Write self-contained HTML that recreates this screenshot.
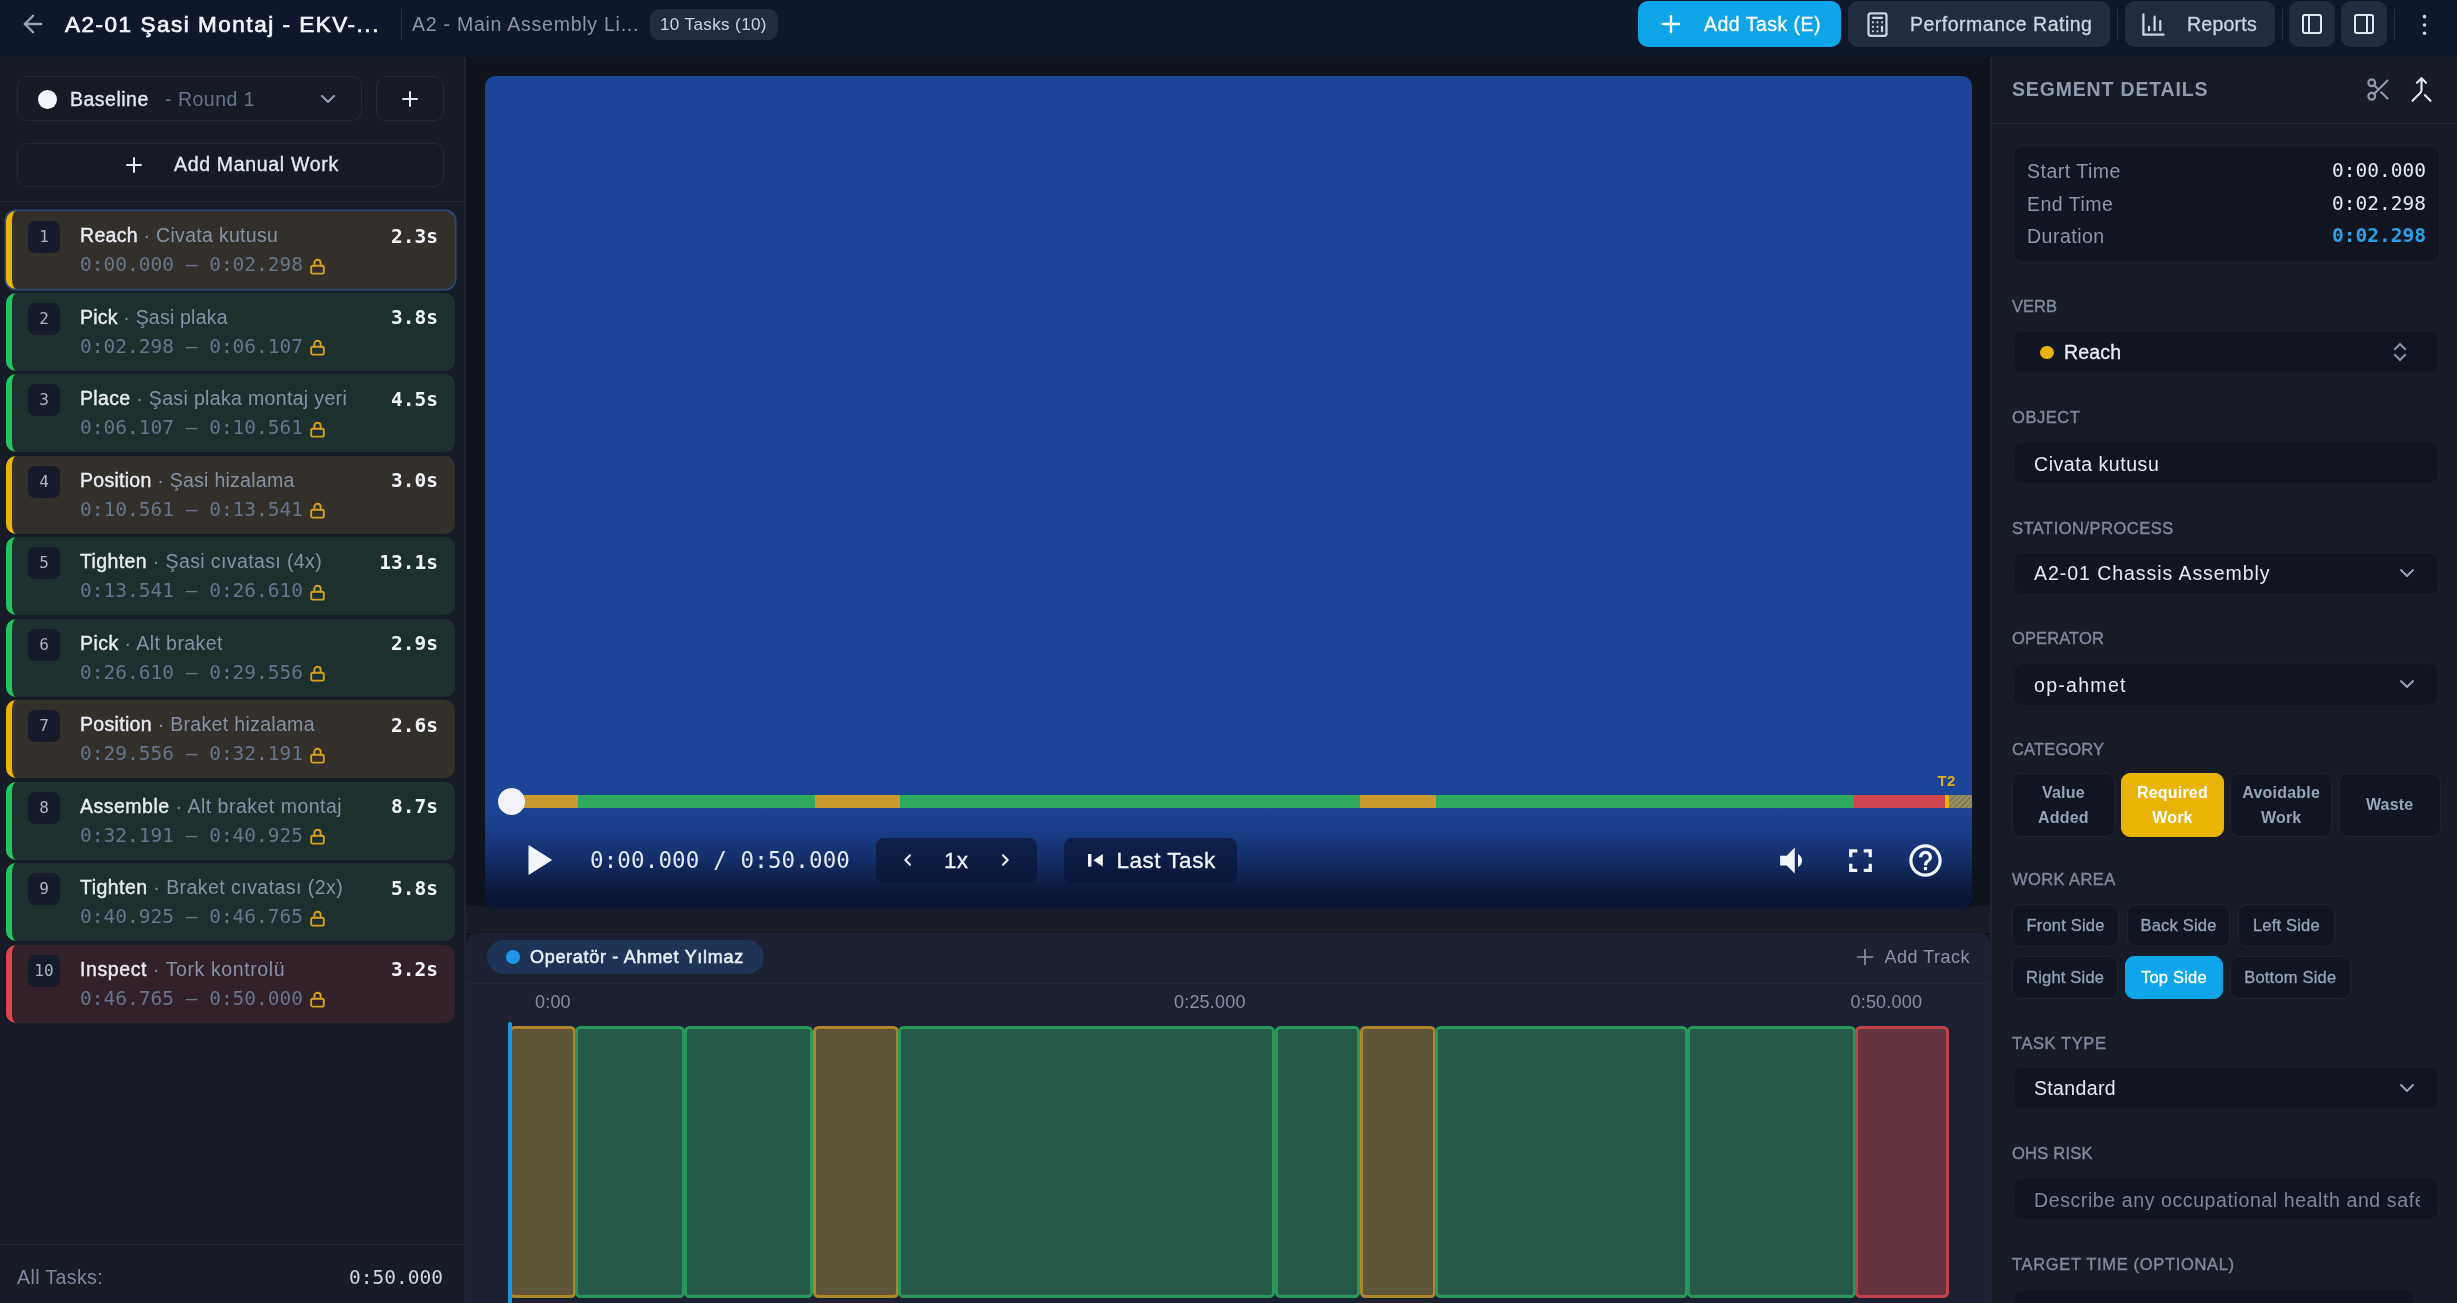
<!DOCTYPE html>
<html lang="en">
<head>
<meta charset="utf-8">
<title>A2-01 Şasi Montaj</title>
<style>
*{box-sizing:border-box;margin:0;padding:0}
html,body{width:2457px;height:1303px;overflow:hidden}
body{background:#0f131d;color:#e2e8f0;font-family:"Liberation Sans",sans-serif;font-size:19.5px;position:relative;-webkit-font-smoothing:antialiased}
.mono{font-family:"DejaVu Sans Mono","Liberation Mono",monospace}
.abs{position:absolute}
svg{display:block;position:absolute;overflow:visible}
.t{position:absolute;white-space:nowrap;line-height:1}
/* header */
#hdr{position:absolute;left:0;top:0;width:2457px;height:57px;background:#0f172a}
.hbtn{position:absolute;top:1px;height:46px;border-radius:10px;background:#222c3e}
.hdiv{position:absolute;top:9px;width:1px;height:31px;background:#263043}
/* sidebar */
#side{position:absolute;left:0;top:57px;width:466px;height:1246px;background:#171b26;border-right:2px solid #1e2331}
.obox{position:absolute;border:1px solid #232938;border-radius:10px;background:#161a25}
.task{position:absolute;left:6px;width:449px;height:78px;border-radius:10px;border-left:6px solid;overflow:hidden}
.task.y{background:#332f2a;border-color:#eab308}
.task.g{background:#1d302d;border-color:#22c55e}
.task.r{background:#322129;border-color:#de444a}
.task .n{position:absolute;left:16px;top:10px;width:32px;height:32px;border-radius:7px;background:#161b2b;color:#aab4c4;font-size:16px;text-align:center;line-height:32.5px}
.task .v{position:absolute;left:68px;top:15.4px;font-size:19.5px;line-height:1;color:#e8ecf2;white-space:nowrap;letter-spacing:.3px}
.task .v b{font-weight:normal;-webkit-text-stroke:.4px #e8ecf2}
.task .v i{font-style:normal;color:#8592a6}
.task .tm{position:absolute;left:68px;top:44.4px;font-size:19.5px;line-height:1;color:#64748b;white-space:nowrap}
.task .d{position:absolute;right:17px;top:15.5px;font-size:19.5px;line-height:1;font-weight:bold;color:#f1f5f9}
.task svg{left:296px;top:45.5px}
/* video */
#vid{position:absolute;left:485px;top:76px;width:1487px;height:830px;border-radius:10px;background:#1c4496;overflow:hidden}
#vid .grad{position:absolute;left:0;right:0;bottom:0;height:100px;background:linear-gradient(to bottom,rgba(10,20,52,0) 0%,rgba(10,20,52,.15) 25%,rgba(10,20,52,.45) 53%,rgba(10,20,52,.85) 79%,rgba(10,20,52,1) 94%,#0a1434 100%)}
.seg{position:absolute;top:718.5px;height:13.5px}
.cbox{position:absolute;background:rgba(10,20,50,.66);border-radius:8px}
/* timeline */
#band{position:absolute;left:466px;top:906px;width:1525px;height:27px;background:#191c27}
#tl{position:absolute;left:466px;top:932px;width:1525px;height:371px;background:#1b2130;border-radius:12px 12px 0 0;border-top:1px solid #141824}
.blk{position:absolute;top:1025.7px;height:272.3px;border:3px solid;border-radius:5.5px}
.blk.y{background:#5f5539;border-color:#ab842c}
.blk.g{background:#245a47;border-color:#27975a}
.blk.r{background:#65323f;border-color:#c3414b}
/* right panel */
#rp{position:absolute;left:1990px;top:57px;width:467px;height:1246px;background:#171b26;border-left:2px solid #1e2331}
.lbl{position:absolute;left:2012px;font-size:16.5px;line-height:1;letter-spacing:1.1px;color:#7d899c;-webkit-text-stroke:.4px #7d899c;white-space:nowrap}
.inp{position:absolute;left:2013px;width:426px;height:43px;border-radius:10px;background:#111522;border:1px solid #181d2b}
.inp .t{left:20px;top:11px;font-size:19.5px;color:#e6eaf0}
.chip{position:absolute;border-radius:9px;background:#111522;border:1px solid #1e2433;color:#94a3b8;text-align:center;white-space:nowrap}
</style>
</head>
<body>
<div id="root" style="position:absolute;left:0;top:0;width:2457px;height:1303px;will-change:transform">
<div id="hdr">
  <svg style="left:19px;top:10px" width="28" height="28" viewBox="0 0 24 24" fill="none" stroke="#94a3b8" stroke-width="2" stroke-linecap="round" stroke-linejoin="round"><path d="M19 12H5"/><path d="M12 19l-7-7 7-7"/></svg>
  <div class="t" id="ttl" style="left:65px;top:14px;font-size:22.5px;color:#f1f5f9;letter-spacing:1.52px;-webkit-text-stroke:.7px #f1f5f9">A2-01 Şasi Montaj - EKV-...</div>
  <div class="hdiv" style="left:401px"></div>
  <div class="t" id="sub" style="left:412px;top:14.5px;font-size:19.5px;color:#8a96a9;letter-spacing:.75px">A2 - Main Assembly Li...</div>
  <div class="abs" style="left:650px;top:9px;width:128px;height:31px;border-radius:9px;background:#222c3e"></div>
  <div class="t" id="bdg" style="left:660px;top:16px;font-size:17px;color:#cbd5e1;letter-spacing:.4px">10 Tasks (10)</div>

  <div class="hbtn" style="left:1638px;width:203px;background:#0ea5e9"></div>
  <svg style="left:1657px;top:10px" width="28" height="28" viewBox="0 0 24 24" fill="none" stroke="#fff" stroke-width="2" stroke-linecap="round"><path d="M5 12h14M12 5v14"/></svg>
  <div class="t" id="addt" style="-webkit-text-stroke:.3px;left:1704px;top:15px;font-size:19.5px;color:#fff;letter-spacing:.48px">Add Task (E)</div>

  <div class="hbtn" style="left:1848px;width:262px"></div>
  <svg style="left:1864px;top:11px" width="27" height="27" viewBox="0 0 24 24" fill="none" stroke="#cbd5e1" stroke-width="2" stroke-linecap="round" stroke-linejoin="round"><rect x="4" y="2" width="16" height="20" rx="2"/><path d="M8 6h8"/><path d="M16 14v4"/><path d="M16 10h.01M12 10h.01M8 10h.01M12 14h.01M8 14h.01M12 18h.01M8 18h.01"/></svg>
  <div class="t" id="perf" style="-webkit-text-stroke:.3px;left:1910px;top:15px;font-size:19.5px;color:#cbd5e1;letter-spacing:.5px">Performance Rating</div>
  <div class="hdiv" style="left:2117px"></div>

  <div class="hbtn" style="left:2124.5px;width:150px"></div>
  <svg style="left:2140px;top:11px" width="27" height="27" viewBox="0 0 24 24" fill="none" stroke="#cbd5e1" stroke-width="2" stroke-linecap="round" stroke-linejoin="round"><path d="M3 3v18h18"/><path d="M18 17V9"/><path d="M13 17V5"/><path d="M8 17v-3"/></svg>
  <div class="t" id="rep" style="-webkit-text-stroke:.3px;left:2187px;top:15px;font-size:19.5px;color:#cbd5e1;letter-spacing:.25px">Reports</div>
  <div class="hdiv" style="left:2282px"></div>

  <div class="hbtn" style="left:2289px;width:46px"></div>
  <svg style="left:2300px;top:12px" width="24" height="24" viewBox="0 0 24 24" fill="none" stroke="#e2e8f0" stroke-width="2" stroke-linecap="round" stroke-linejoin="round"><rect x="3" y="3" width="18" height="18" rx="2"/><path d="M9 3v18"/></svg>
  <div class="hbtn" style="left:2341px;width:46px"></div>
  <svg style="left:2352px;top:12px" width="24" height="24" viewBox="0 0 24 24" fill="none" stroke="#e2e8f0" stroke-width="2" stroke-linecap="round" stroke-linejoin="round"><rect x="3" y="3" width="18" height="18" rx="2"/><path d="M15 3v18"/></svg>
  <div class="hdiv" style="left:2394px"></div>
  <svg style="left:2411px;top:11px" width="27" height="27" viewBox="0 0 24 24" fill="#cbd5e1" stroke="none"><circle cx="12" cy="5" r="1.6"/><circle cx="12" cy="12.4" r="1.6"/><circle cx="12" cy="19.8" r="1.6"/></svg>
</div>

<div id="side">
  <div class="obox" style="left:17px;top:19px;width:345px;height:45px"></div>
  <div class="abs" style="left:38px;top:32.5px;width:19px;height:19px;border-radius:50%;background:#f1f5f9"></div>
  <div class="t" id="bsl" style="left:70px;top:33px;font-size:19.5px;color:#e2e8f0;letter-spacing:.5px;-webkit-text-stroke:.35px #e2e8f0">Baseline</div>
  <div class="t" id="rnd" style="left:165px;top:33px;font-size:19.5px;color:#64748b;letter-spacing:.5px">- Round 1</div>
  <svg style="left:316px;top:30px" width="24" height="24" viewBox="0 0 24 24" fill="none" stroke="#94a3b8" stroke-width="2" stroke-linecap="round" stroke-linejoin="round"><path d="M6 9l6 6 6-6"/></svg>
  <div class="obox" style="left:376px;top:19px;width:68px;height:45px"></div>
  <svg style="left:398px;top:30px" width="24" height="24" viewBox="0 0 24 24" fill="none" stroke="#e2e8f0" stroke-width="2" stroke-linecap="round"><path d="M5 12h14M12 5v14"/></svg>
  <div class="obox" style="left:17px;top:85.5px;width:427px;height:44px"></div>
  <svg style="left:122px;top:95.5px" width="24" height="24" viewBox="0 0 24 24" fill="none" stroke="#e2e8f0" stroke-width="2" stroke-linecap="round"><path d="M5 12h14M12 5v14"/></svg>
  <div class="t" id="amw" style="left:174px;top:97.5px;font-size:19.5px;color:#e2e8f0;letter-spacing:.68px;-webkit-text-stroke:.35px #e2e8f0">Add Manual Work</div>
  <div class="abs" style="left:0;top:144px;width:464px;height:1px;background:#222736"></div>
  <div class="task y" style="top:154.0px;box-shadow:0 0 0 1.5px #2a4a7e"><div class="n mono">1</div><div class="v" id="v1" style="letter-spacing:0.30px"><b>Reach</b><i> · Civata kutusu</i></div><div class="tm mono" id="tm1">0:00.000 – 0:02.298</div><div class="d mono" id="d1">2.3s</div><svg width="19" height="19" viewBox="0 0 24 24" fill="none" stroke="#d4a11e" stroke-width="2.4" stroke-linecap="round" stroke-linejoin="round"><rect x="4" y="11" width="16" height="10" rx="2"/><path d="M8 11V7.5a4 4 0 0 1 8 0V11"/></svg></div>
  <div class="task g" style="top:235.5px"><div class="n mono">2</div><div class="v" id="v2" style="letter-spacing:0.21px"><b>Pick</b><i> · Şasi plaka</i></div><div class="tm mono" id="tm2">0:02.298 – 0:06.107</div><div class="d mono" id="d2">3.8s</div><svg width="19" height="19" viewBox="0 0 24 24" fill="none" stroke="#d4a11e" stroke-width="2.4" stroke-linecap="round" stroke-linejoin="round"><rect x="4" y="11" width="16" height="10" rx="2"/><path d="M8 11V7.5a4 4 0 0 1 8 0V11"/></svg></div>
  <div class="task g" style="top:317.0px"><div class="n mono">3</div><div class="v" id="v3" style="letter-spacing:0.34px"><b>Place</b><i> · Şasi plaka montaj yeri</i></div><div class="tm mono" id="tm3">0:06.107 – 0:10.561</div><div class="d mono" id="d3">4.5s</div><svg width="19" height="19" viewBox="0 0 24 24" fill="none" stroke="#d4a11e" stroke-width="2.4" stroke-linecap="round" stroke-linejoin="round"><rect x="4" y="11" width="16" height="10" rx="2"/><path d="M8 11V7.5a4 4 0 0 1 8 0V11"/></svg></div>
  <div class="task y" style="top:398.5px"><div class="n mono">4</div><div class="v" id="v4" style="letter-spacing:0.27px"><b>Position</b><i> · Şasi hizalama</i></div><div class="tm mono" id="tm4">0:10.561 – 0:13.541</div><div class="d mono" id="d4">3.0s</div><svg width="19" height="19" viewBox="0 0 24 24" fill="none" stroke="#d4a11e" stroke-width="2.4" stroke-linecap="round" stroke-linejoin="round"><rect x="4" y="11" width="16" height="10" rx="2"/><path d="M8 11V7.5a4 4 0 0 1 8 0V11"/></svg></div>
  <div class="task g" style="top:480.0px"><div class="n mono">5</div><div class="v" id="v5" style="letter-spacing:0.39px"><b>Tighten</b><i> · Şasi cıvatası (4x)</i></div><div class="tm mono" id="tm5">0:13.541 – 0:26.610</div><div class="d mono" id="d5">13.1s</div><svg width="19" height="19" viewBox="0 0 24 24" fill="none" stroke="#d4a11e" stroke-width="2.4" stroke-linecap="round" stroke-linejoin="round"><rect x="4" y="11" width="16" height="10" rx="2"/><path d="M8 11V7.5a4 4 0 0 1 8 0V11"/></svg></div>
  <div class="task g" style="top:561.5px"><div class="n mono">6</div><div class="v" id="v6" style="letter-spacing:0.44px"><b>Pick</b><i> · Alt braket</i></div><div class="tm mono" id="tm6">0:26.610 – 0:29.556</div><div class="d mono" id="d6">2.9s</div><svg width="19" height="19" viewBox="0 0 24 24" fill="none" stroke="#d4a11e" stroke-width="2.4" stroke-linecap="round" stroke-linejoin="round"><rect x="4" y="11" width="16" height="10" rx="2"/><path d="M8 11V7.5a4 4 0 0 1 8 0V11"/></svg></div>
  <div class="task y" style="top:643.0px"><div class="n mono">7</div><div class="v" id="v7" style="letter-spacing:0.32px"><b>Position</b><i> · Braket hizalama</i></div><div class="tm mono" id="tm7">0:29.556 – 0:32.191</div><div class="d mono" id="d7">2.6s</div><svg width="19" height="19" viewBox="0 0 24 24" fill="none" stroke="#d4a11e" stroke-width="2.4" stroke-linecap="round" stroke-linejoin="round"><rect x="4" y="11" width="16" height="10" rx="2"/><path d="M8 11V7.5a4 4 0 0 1 8 0V11"/></svg></div>
  <div class="task g" style="top:724.5px"><div class="n mono">8</div><div class="v" id="v8" style="letter-spacing:0.50px"><b>Assemble</b><i> · Alt braket montaj</i></div><div class="tm mono" id="tm8">0:32.191 – 0:40.925</div><div class="d mono" id="d8">8.7s</div><svg width="19" height="19" viewBox="0 0 24 24" fill="none" stroke="#d4a11e" stroke-width="2.4" stroke-linecap="round" stroke-linejoin="round"><rect x="4" y="11" width="16" height="10" rx="2"/><path d="M8 11V7.5a4 4 0 0 1 8 0V11"/></svg></div>
  <div class="task g" style="top:806.0px"><div class="n mono">9</div><div class="v" id="v9" style="letter-spacing:0.45px"><b>Tighten</b><i> · Braket cıvatası (2x)</i></div><div class="tm mono" id="tm9">0:40.925 – 0:46.765</div><div class="d mono" id="d9">5.8s</div><svg width="19" height="19" viewBox="0 0 24 24" fill="none" stroke="#d4a11e" stroke-width="2.4" stroke-linecap="round" stroke-linejoin="round"><rect x="4" y="11" width="16" height="10" rx="2"/><path d="M8 11V7.5a4 4 0 0 1 8 0V11"/></svg></div>
  <div class="task r" style="top:887.5px"><div class="n mono">10</div><div class="v" id="v10" style="letter-spacing:0.59px"><b>Inspect</b><i> · Tork kontrolü</i></div><div class="tm mono" id="tm10">0:46.765 – 0:50.000</div><div class="d mono" id="d10">3.2s</div><svg width="19" height="19" viewBox="0 0 24 24" fill="none" stroke="#d4a11e" stroke-width="2.4" stroke-linecap="round" stroke-linejoin="round"><rect x="4" y="11" width="16" height="10" rx="2"/><path d="M8 11V7.5a4 4 0 0 1 8 0V11"/></svg></div>
  <div class="abs" style="left:0;top:1187px;width:464px;height:1px;background:#222736"></div>
  <div class="t" id="allt" style="left:17px;top:1211px;font-size:19.5px;color:#7c899c;letter-spacing:.4px">All Tasks:</div>
  <div class="t mono" id="alltv" style="right:21px;top:1211px;font-size:19.5px;color:#cbd5e1">0:50.000</div>
</div>
<div id="vid">
  <div class="seg" style="left:26.6px;width:66.3px;background:#c99a2e"></div>
  <div class="seg" style="left:92.6px;width:109.6px;background:#2eaa5e"></div>
  <div class="seg" style="left:201.9px;width:128.1px;background:#2eaa5e"></div>
  <div class="seg" style="left:329.7px;width:85.8px;background:#c99a2e"></div>
  <div class="seg" style="left:415.2px;width:375.4px;background:#2eaa5e"></div>
  <div class="seg" style="left:790.3px;width:84.9px;background:#2eaa5e"></div>
  <div class="seg" style="left:874.9px;width:75.9px;background:#c99a2e"></div>
  <div class="seg" style="left:950.5px;width:251.0px;background:#2eaa5e"></div>
  <div class="seg" style="left:1201.1px;width:167.9px;background:#2eaa5e"></div>
  <div class="seg" style="left:1368.8px;width:93.1px;background:#d1464d"></div>
  <div class="seg" style="left:1461px;width:26px;background:repeating-linear-gradient(135deg,#9a915a 0 2px,#7f7c5e 2px 4px)"></div>
  <div class="seg" style="left:1460px;width:3.5px;background:#eab308"></div>
  <div class="grad"></div>
  <div class="t" id="t2" style="left:1452.5px;top:697px;font-size:15px;font-weight:bold;color:#e0ad14;letter-spacing:.3px">T2</div>
  <div class="abs" style="left:13px;top:712px;width:27px;height:27px;border-radius:50%;background:#f1f3f6"></div>
</div>
<svg style="left:512px;top:835px" width="50" height="50" viewBox="0 0 24 24" fill="#f1f5f9" stroke="#f1f5f9" stroke-width=".6" stroke-linejoin="round"><path d="M8.2 5.3v13.4l10.6-6.7z"/></svg>
<div class="t mono" id="ptime" style="left:590px;top:849px;font-size:22.5px;color:#e5e9f0;letter-spacing:.14px">0:00.000 / 0:50.000</div>
<div class="cbox" style="left:876px;top:837.5px;width:160.5px;height:45.5px"></div>
<svg style="left:900px;top:852px" width="16" height="16" viewBox="0 0 24 24" fill="none" stroke="#e5e9f0" stroke-width="3.2" stroke-linecap="round" stroke-linejoin="round"><path d="M15 5l-7 7 7 7"/></svg>
<div class="t" id="spd" style="left:944px;top:849.5px;font-size:22.5px;color:#f1f5f9;letter-spacing:.3px;-webkit-text-stroke:.3px">1x</div>
<svg style="left:996.5px;top:852px" width="16" height="16" viewBox="0 0 24 24" fill="none" stroke="#e5e9f0" stroke-width="3.2" stroke-linecap="round" stroke-linejoin="round"><path d="M9 5l7 7-7 7"/></svg>
<div class="cbox" style="left:1064px;top:837.5px;width:173px;height:45.5px"></div>
<svg style="left:1088px;top:854px" width="15" height="13" viewBox="0 0 15 13" fill="#f1f5f9"><rect x="0" y="0" width="3.4" height="12.6"/><path d="M14.8 0v12.6L5.4 6.3z"/></svg>
<div class="t" id="lastt" style="left:1116.5px;top:849.5px;font-size:22.5px;color:#f1f5f9;letter-spacing:.5px;-webkit-text-stroke:.3px">Last Task</div>
<svg style="left:1772px;top:840.5px" width="39" height="39" viewBox="0 0 24 24" fill="#f1f5f9"><path d="M18.5 12c0-1.77-1.02-3.29-2.5-4.03v8.05c1.48-.73 2.5-2.25 2.5-4.02zM5 9v6h4l5 5V4L9 9H5z"/></svg>
<svg style="left:1841px;top:841px" width="39" height="39" viewBox="0 0 24 24" fill="#f1f5f9"><path d="M7 14H5v5h5v-2H7v-3zm-2-4h2V7h3V5H5v5zm12 7h-3v2h5v-5h-2v3zM14 5v2h3v3h2V5h-5z"/></svg>
<svg style="left:1906px;top:840.5px" width="39" height="39" viewBox="0 0 24 24" fill="#f1f5f9"><path d="M11 18h2v-2h-2v2zm1-16C6.48 2 2 6.48 2 12s4.48 10 10 10 10-4.48 10-10S17.520 2 12 2zm0 18c-4.410 0-8-3.590-8-8s3.590-8 8-8 8 3.590 8 8-3.590 8-8 8zm0-14c-2.210 0-4 1.790-4 4h2c0-1.100.9-2 2-2s2 .9 2 2c0 2-3 1.750-3 5h2c0-2.250 3-2.500 3-5 0-2.210-1.790-4-4-4z"/></svg>
<div id="band"></div>
<div class="abs" style="left:486px;top:906px;width:1485px;height:5px;background:linear-gradient(to bottom,rgba(10,20,52,.85),rgba(10,20,52,0))"></div>
<div id="tl"></div>
<div class="abs" style="left:467px;top:982.5px;width:1523px;height:1px;background:rgba(255,255,255,.035)"></div>
<div class="abs" style="left:487px;top:940px;width:277px;height:34px;border-radius:17px;background:#1f3357"></div>
<div class="abs" style="left:506px;top:950px;width:14px;height:14px;border-radius:50%;background:#2196e8"></div>
<div class="t" id="oper" style="left:530px;top:948px;font-size:18px;color:#e8edf5;letter-spacing:.7px;-webkit-text-stroke:.55px #e8edf5">Operatör - Ahmet Yılmaz</div>
<svg style="left:1855px;top:947px" width="20" height="20" viewBox="0 0 24 24" fill="none" stroke="#8b95a7" stroke-width="2" stroke-linecap="round"><path d="M3 12h18M12 3v18"/></svg>
<div class="t" id="addtr" style="left:1884.5px;top:948px;font-size:18px;color:#8b95a7;letter-spacing:.5px">Add Track</div>
<div class="t" id="tk0" style="left:535px;top:993px;font-size:18px;color:#8590a2;letter-spacing:.2px">0:00</div>
<div class="t" id="tk25" style="left:1174px;top:993px;font-size:18px;color:#8590a2;letter-spacing:.2px">0:25.000</div>
<div class="t" id="tk50" style="left:1850.5px;top:993px;font-size:18px;color:#8590a2;letter-spacing:.2px">0:50.000</div>
<div class="blk y" style="left:508.6px;width:67.0px"></div>
<div class="blk g" style="left:574.8px;width:110.5px"></div>
<div class="blk g" style="left:684.4px;width:129.0px"></div>
<div class="blk y" style="left:812.7px;width:86.6px"></div>
<div class="blk g" style="left:898.4px;width:377.1px"></div>
<div class="blk g" style="left:1274.7px;width:85.6px"></div>
<div class="blk y" style="left:1359.5px;width:76.7px"></div>
<div class="blk g" style="left:1435.4px;width:252.3px"></div>
<div class="blk g" style="left:1686.8px;width:168.9px"></div>
<div class="blk r" style="left:1855.0px;width:93.9px"></div>
<div class="abs" style="left:508px;top:1022px;width:4px;height:281px;background:#1f93dc;border-radius:2px 2px 0 0"></div>
<div id="rp"></div>
<div class="t" id="segd" style="left:2012px;top:80px;font-size:19.5px;font-weight:bold;color:#8f9cb0;letter-spacing:.83px">SEGMENT DETAILS</div>
<svg style="left:2365.4px;top:76px" width="27" height="27" viewBox="0 0 24 24" fill="none" stroke="#8e9aad" stroke-width="1.9" stroke-linecap="round" stroke-linejoin="round"><circle cx="6" cy="6" r="3"/><circle cx="6" cy="18" r="3"/><path d="M20 4L8.12 15.88"/><path d="M14.47 14.48L20 20"/><path d="M8.12 8.12L12 12"/></svg>
<svg style="left:2407.8px;top:75.8px" width="27" height="27" viewBox="0 0 24 24" fill="none" stroke="#e2e8f0" stroke-width="1.9" stroke-linecap="round" stroke-linejoin="round"><path d="M8 6l4-4 4 4"/><path d="M12 2v10.3a4 4 0 0 1-1.172 2.872L4 22"/><path d="M20 22l-5-5"/></svg>
<div class="abs" style="left:1992px;top:122.5px;width:465px;height:1px;background:#222736"></div>
<div class="abs" style="left:2012.5px;top:144.5px;width:427px;height:118px;border-radius:10px;background:#111522;border:1px solid #1b2030"></div>
<div class="t" id="st1" style="left:2027px;top:162px;font-size:19.5px;color:#8a96a9;letter-spacing:.5px">Start Time</div>
<div class="t" id="st2" style="left:2027px;top:194.5px;font-size:19.5px;color:#8a96a9;letter-spacing:.5px">End Time</div>
<div class="t" id="st3" style="left:2027px;top:227px;font-size:19.5px;color:#8a96a9;letter-spacing:.5px">Duration</div>
<div class="t mono" id="sv1" style="left:2332px;top:161px;font-size:19.5px;color:#e2e8f0">0:00.000</div>
<div class="t mono" id="sv2" style="left:2332px;top:193.5px;font-size:19.5px;color:#e2e8f0">0:02.298</div>
<div class="t mono" id="sv3" style="left:2332px;top:226px;font-size:19.5px;color:#2d9fe6;font-weight:bold">0:02.298</div>
<div class="lbl" id="lb0" style="top:298px;letter-spacing:0px">VERB</div>
<div class="lbl" id="lb1" style="top:408.5px;letter-spacing:0.57px">OBJECT</div>
<div class="lbl" id="lb2" style="top:519.5px;letter-spacing:0.49px">STATION/PROCESS</div>
<div class="lbl" id="lb3" style="top:630px;letter-spacing:0.11px">OPERATOR</div>
<div class="lbl" id="lb4" style="top:741px;letter-spacing:0.15px">CATEGORY</div>
<div class="lbl" id="lb5" style="top:871px;letter-spacing:0.4px">WORK AREA</div>
<div class="lbl" id="lb6" style="top:1034.5px;letter-spacing:0.58px">TASK TYPE</div>
<div class="lbl" id="lb7" style="top:1145px;letter-spacing:0.24px">OHS RISK</div>
<div class="lbl" id="lb8" style="top:1256px;letter-spacing:0.66px">TARGET TIME (OPTIONAL)</div>
<div class="inp" style="top:330.5px"><div class="abs" style="left:26px;top:14px;width:13.5px;height:13.5px;border-radius:50%;background:#eab308"></div><div class="t" id="in1" style="left:50px;letter-spacing:.2px;-webkit-text-stroke:.35px #e6eaf0">Reach</div></div>
<svg style="left:2388px;top:340px" width="24" height="24" viewBox="0 0 24 24" fill="none" stroke="#8b97aa" stroke-width="2" stroke-linecap="round" stroke-linejoin="round"><path d="M7 15l5 5 5-5"/><path d="M7 9l5-5 5 5"/></svg>
<div class="inp" style="top:441px"><div class="t" id="in2" style="top:12.5px;letter-spacing:.55px">Civata kutusu</div></div>
<div class="inp" style="top:551.5px"><div class="t" id="in3" style="top:11.5px;letter-spacing:.95px">A2-01 Chassis Assembly</div></div><svg style="left:2394.5px;top:561px" width="24" height="24" viewBox="0 0 24 24" fill="none" stroke="#94a3b8" stroke-width="2" stroke-linecap="round" stroke-linejoin="round"><path d="M6 9l6 6 6-6"/></svg>
<div class="inp" style="top:662.5px"><div class="t" id="in4" style="top:12.5px;letter-spacing:1.3px">op-ahmet</div></div><svg style="left:2394.5px;top:672px" width="24" height="24" viewBox="0 0 24 24" fill="none" stroke="#94a3b8" stroke-width="2" stroke-linecap="round" stroke-linejoin="round"><path d="M6 9l6 6 6-6"/></svg>
<div class="inp" style="top:1066.5px"><div class="t" id="in5" style="letter-spacing:.35px">Standard</div></div><svg style="left:2394.5px;top:1076px" width="24" height="24" viewBox="0 0 24 24" fill="none" stroke="#94a3b8" stroke-width="2" stroke-linecap="round" stroke-linejoin="round"><path d="M6 9l6 6 6-6"/></svg>
<div class="inp" style="top:1177px;overflow:hidden"><div class="t" id="in6" style="top:12.5px;letter-spacing:.6px;color:#7b879b;width:386px;overflow:hidden">Describe any occupational health and safety risks</div></div>
<div class="inp" style="top:1288.5px;width:401px"></div>
<div class="chip" id="cat0" style="left:2012.3px;top:772.5px;width:102.3px;height:64px;font-size:16px;font-weight:bold;line-height:24.5px;letter-spacing:.2px;padding-top:7.5px;"><span id="scat0">Value<br>Added</span></div>
<div class="chip" id="cat1" style="left:2121.3px;top:772.5px;width:102.3px;height:64px;font-size:16px;font-weight:bold;line-height:24.5px;letter-spacing:.2px;padding-top:7.5px;background:#eab308;border-color:#eab308;color:#fff;"><span id="scat1">Required<br>Work</span></div>
<div class="chip" id="cat2" style="left:2230px;top:772.5px;width:102.3px;height:64px;font-size:16px;font-weight:bold;line-height:24.5px;letter-spacing:.2px;padding-top:7.5px;"><span id="scat2">Avoidable<br>Work</span></div>
<div class="chip" id="cat3" style="left:2338.5px;top:772.5px;width:102.3px;height:64px;font-size:16px;font-weight:bold;line-height:24.5px;letter-spacing:.2px;padding-top:19.5px;"><span id="scat3">Waste</span></div>
<div class="chip" id="wa0" style="left:2012.3px;top:904px;width:106.4px;height:43px;font-size:16.5px;line-height:41px;letter-spacing:.2px;-webkit-text-stroke:.3px;"><span id="swa0">Front Side</span></div>
<div class="chip" id="wa1" style="left:2127px;top:904px;width:103px;height:43px;font-size:16.5px;line-height:41px;letter-spacing:.2px;-webkit-text-stroke:.3px;"><span id="swa1">Back Side</span></div>
<div class="chip" id="wa2" style="left:2238.2px;top:904px;width:96.4px;height:43px;font-size:16.5px;line-height:41px;letter-spacing:.2px;-webkit-text-stroke:.3px;"><span id="swa2">Left Side</span></div>
<div class="chip" id="wa3" style="left:2012.3px;top:956px;width:105.7px;height:43px;font-size:16.5px;line-height:41px;letter-spacing:.2px;-webkit-text-stroke:.3px;"><span id="swa3">Right Side</span></div>
<div class="chip" id="wa4" style="left:2125.3px;top:956px;width:97.3px;height:43px;font-size:16.5px;line-height:41px;letter-spacing:.2px;-webkit-text-stroke:.3px;background:#0ea5e9;border-color:#0ea5e9;color:#fff;"><span id="swa4">Top Side</span></div>
<div class="chip" id="wa5" style="left:2230px;top:956px;width:120.6px;height:43px;font-size:16.5px;line-height:41px;letter-spacing:.2px;-webkit-text-stroke:.3px;"><span id="swa5">Bottom Side</span></div>
</div>
</body>
</html>
